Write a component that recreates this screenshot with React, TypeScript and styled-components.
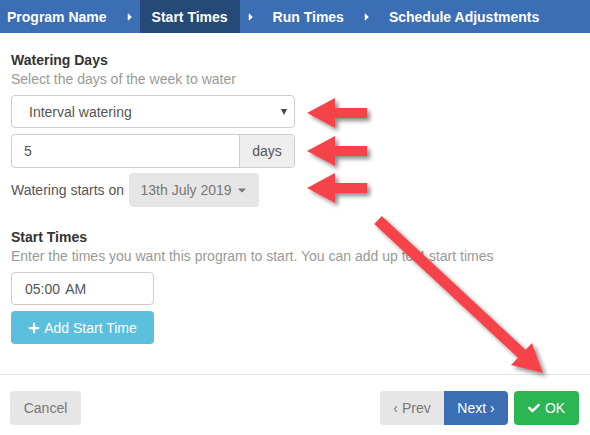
import React from "react";
import styled, { createGlobalStyle } from "styled-components";
import { FaCaretRight, FaCaretDown, FaPlus, FaCheck } from "react-icons/fa";

const Global = createGlobalStyle`
  html, body { margin: 0; padding: 0; background: #fff; }
  body { font-family: "Liberation Sans", Arial, sans-serif; font-size: 14px; color: #333; }
  * { box-sizing: border-box; }
`;

const Page = styled.div`
  position: relative;
  width: 590px;
  height: 435px;
  display: flex;
  flex-direction: column;
  overflow: hidden;
`;

const Header = styled.div`
  height: 33px;
  background: #3b6eb5;
  display: flex;
  align-items: stretch;
`;

const Tab = styled.div<{ $active?: boolean; $first?: boolean }>`
  display: flex;
  align-items: center;
  padding: 0 12px 0 ${(p) => (p.$first ? "7px" : "12px")};
  background: ${(p) => (p.$active ? "#264a78" : "transparent")};
  color: #fff;
  font-weight: bold;
  font-size: 14px;
  white-space: nowrap;
`;

const Sep = styled.div`
  display: flex;
  align-items: center;
  color: #fff;
  font-size: 12px;
  width: 21px;
  padding-left: 5px;
`;

const Content = styled.div`
  flex: 1;
  padding: 17px 11px 0 11px;
  display: flex;
  flex-direction: column;
`;

const Title = styled.div<{ $mt?: number }>`
  font-weight: bold;
  font-size: 14px;
  line-height: 20px;
  color: #333;
  margin-top: ${(p) => p.$mt ?? 0}px;
`;

const Desc = styled.div`
  font-size: 14px;
  line-height: 18px;
  color: #999;
  margin-bottom: 7px;
  white-space: nowrap;
`;

const SelectBox = styled.div`
  width: 284px;
  height: 33px;
  border: 1px solid #ccc;
  border-radius: 4px;
  display: flex;
  align-items: center;
  justify-content: space-between;
  padding: 0 7px 0 17px;
  color: #555;
  font-size: 14px;
`;

const TinyCaret = styled.span`
  width: 0;
  height: 0;
  border-left: 3.5px solid transparent;
  border-right: 3.5px solid transparent;
  border-top: 6px solid #444;
`;

const InputGroup = styled.div`
  width: 284px;
  height: 34px;
  margin-top: 6px;
  display: flex;
  border: 1px solid #ccc;
  border-radius: 4px;
  overflow: hidden;
`;

const InputText = styled.div`
  flex: 1;
  display: flex;
  align-items: center;
  padding-left: 12px;
  color: #555;
`;

const Addon = styled.div`
  width: 55px;
  background: #eee;
  border-left: 1px solid #ccc;
  display: flex;
  align-items: center;
  justify-content: center;
  color: #555;
`;

const StartRow = styled.div`
  display: flex;
  align-items: center;
  margin-top: 5px;
  gap: 5px;
  color: #555;
`;

const DateButton = styled.div`
  width: 130px;
  height: 34px;
  background: #e6e6e6;
  border-radius: 4px;
  color: #777;
  display: flex;
  align-items: center;
  justify-content: center;
  gap: 4px;
  svg { font-size: 12px; }
`;

const TimeBox = styled.div`
  width: 143px;
  height: 33px;
  border: 1px solid #ccc;
  border-radius: 4px;
  display: flex;
  align-items: center;
  padding-left: 13px;
  color: #555;
  word-spacing: 2px;
`;

const InfoButton = styled.div`
  width: 143px;
  height: 33px;
  margin-top: 6px;
  background: #5bc0de;
  border-radius: 4px;
  color: #fff;
  display: flex;
  align-items: center;
  justify-content: center;
  gap: 4px;
  svg { font-size: 12px; }
`;

const Footer = styled.div`
  height: 61px;
  border-top: 1px solid #e5e5e5;
  padding: 16px 11px 0 10px;
  display: flex;
  align-items: flex-start;
  justify-content: space-between;
`;

const Btn = styled.div<{ $bg: string; $fg: string; $w: number; $radius?: string }>`
  width: ${(p) => p.$w}px;
  height: 34px;
  background: ${(p) => p.$bg};
  color: ${(p) => p.$fg};
  border-radius: ${(p) => p.$radius ?? "4px"};
  display: flex;
  align-items: center;
  justify-content: center;
  gap: 5px;
  font-size: 14px;
  svg { font-size: 12px; }
`;

const BtnGroup = styled.div`
  display: flex;
  gap: 6px;
`;

const Joined = styled.div`
  display: flex;
`;

const Overlay = styled.svg`
  position: absolute;
  left: 0;
  top: 0;
  pointer-events: none;
`;

function HArrow({ y }: { y: number }) {
  const tip = 307;
  const base = 335;
  const end = 367;
  return (
    <polygon
      points={`${tip},${y} ${base},${y - 15} ${base},${y - 5} ${end},${y - 5} ${end},${y + 5} ${base},${y + 5} ${base},${y + 15}`}
    />
  );
}

export default function App() {
  return (
    <Page>
      <Global />
      <Header>
        <Tab $first>Program Name</Tab>
        <Sep><FaCaretRight /></Sep>
        <Tab $active>Start Times</Tab>
        <Sep><FaCaretRight /></Sep>
        <Tab>Run Times</Tab>
        <Sep><FaCaretRight /></Sep>
        <Tab>Schedule Adjustments</Tab>
      </Header>
      <Content>
        <Title>Watering Days</Title>
        <Desc>Select the days of the week to water</Desc>
        <SelectBox>
          <span>Interval watering</span>
          <TinyCaret />
        </SelectBox>
        <InputGroup>
          <InputText>5</InputText>
          <Addon>days</Addon>
        </InputGroup>
        <StartRow>
          <span>Watering starts on</span>
          <DateButton>
            13th July 2019 <FaCaretDown />
          </DateButton>
        </StartRow>
        <Title $mt={20}>Start Times</Title>
        <Desc>Enter the times you want this program to start. You can add up to 4 start times</Desc>
        <TimeBox>05:00 AM</TimeBox>
        <InfoButton>
          <FaPlus /> Add Start Time
        </InfoButton>
      </Content>
      <Footer>
        <Btn $bg="#e6e6e6" $fg="#777" $w={71}>Cancel</Btn>
        <BtnGroup>
          <Joined>
            <Btn $bg="#e6e6e6" $fg="#777" $w={64} $radius="4px 0 0 4px">‹ Prev</Btn>
            <Btn $bg="#3b6eb5" $fg="#fff" $w={64} $radius="0 4px 4px 0">Next ›</Btn>
          </Joined>
          <Btn $bg="#2bb553" $fg="#fff" $w={65}>
            <FaCheck /> OK
          </Btn>
        </BtnGroup>
      </Footer>
      <Overlay width="590" height="435" viewBox="0 0 590 435">
        <defs>
          <filter id="sh" x="-20%" y="-20%" width="140%" height="140%">
            <feDropShadow dx="3" dy="3" stdDeviation="2.2" floodColor="#000" floodOpacity="0.45" />
          </filter>
        </defs>
        <g fill="#f64349" filter="url(#sh)">
          <HArrow y={113} />
          <HArrow y={151} />
          <HArrow y={188} />
          <line x1="378" y1="220" x2="522" y2="354" stroke="#f64349" strokeWidth="11" />
          <polygon points="543,373 511,365 532,343" />
        </g>
      </Overlay>
    </Page>
  );
}
